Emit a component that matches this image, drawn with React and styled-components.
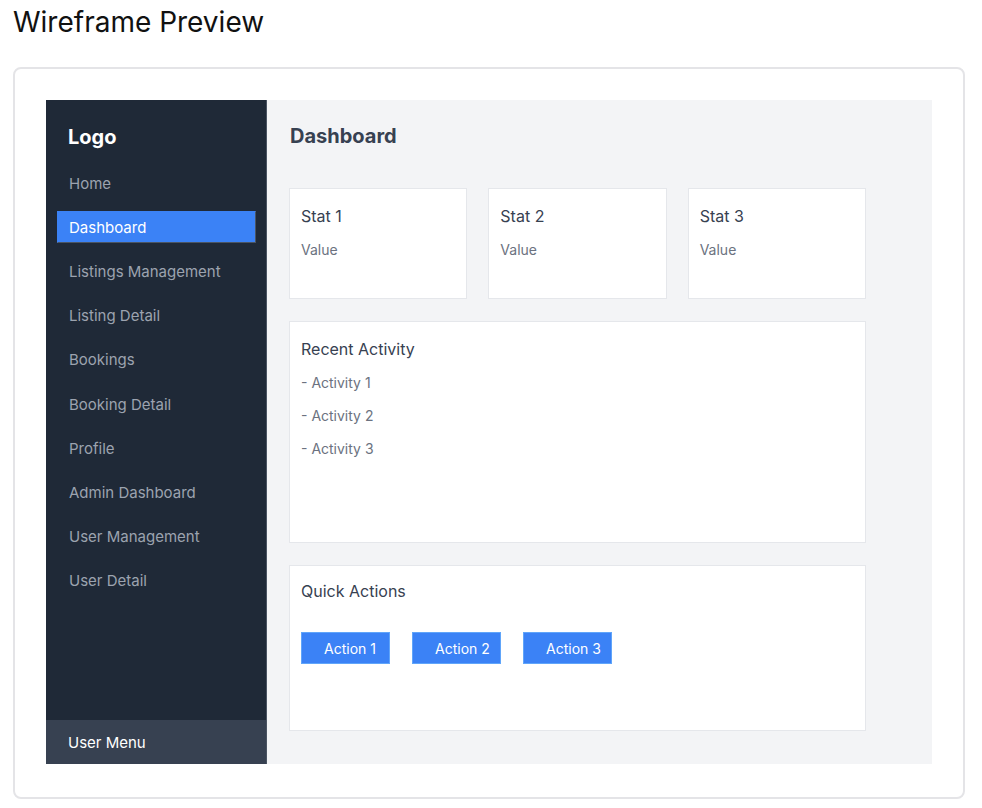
import React from "react";
import styled, { createGlobalStyle } from "styled-components";

const Global = createGlobalStyle`
  html, body { margin: 0; padding: 0; background: #ffffff; }
  body { font-family: Inter, "Noto Sans", "Liberation Sans", sans-serif; -webkit-font-smoothing: antialiased; }
  * { box-sizing: border-box; }
`;

const Page = styled.div`
  padding: 0 0 0 13px;
`;

const PageTitle = styled.h1`
  margin: 6px 0 28px;
  font-size: 28px;
  line-height: 33px;
  font-weight: 400;
  color: #111111;
`;

const PreviewCard = styled.div`
  width: 952px;
  border: 2px solid #e4e4e7;
  border-radius: 8px;
  padding: 31px 31px 33px;
  background: #ffffff;
`;

const Frame = styled.div`
  display: flex;
  height: 664px;
`;

const Sidebar = styled.aside`
  width: 221px;
  flex: none;
  background: #1f2937;
  border-right: 1px solid #4b5563;
  display: flex;
  flex-direction: column;
`;

const SideTop = styled.div`
  flex: 1;
  padding: 23px 10px 0 11px;
  display: flex;
  flex-direction: column;
  gap: 12.2px;
`;

const Logo = styled.div`
  font-size: 20px;
  line-height: 28px;
  font-weight: 700;
  color: #ffffff;
  padding-left: 11px;
  margin-bottom: 4px;
`;

const NavItem = styled.div`
  height: 32px;
  display: flex;
  align-items: center;
  padding-left: 11px;
  font-size: 15px;
  color: ${(p) => (p.$active ? "#ffffff" : "#9ca3af")};
  background: ${(p) => (p.$active ? "#3b82f6" : "transparent")};
  border: 1px solid ${(p) => (p.$active ? "#4b5563" : "transparent")};
  border-left-color: transparent;
  border-top-color: ${(p) => (p.$active ? "#3b82f6" : "transparent")};
`;

const UserMenu = styled.div`
  height: 44px;
  background: #374151;
  display: flex;
  align-items: center;
  padding-left: 22px;
  font-size: 15px;
  color: #ffffff;
`;

const Main = styled.main`
  flex: 1;
  background: #f3f4f6;
  padding: 22px 0 0 22px;
`;

const Content = styled.div`
  width: 577px;
  display: flex;
  flex-direction: column;
`;

const MainTitle = styled.h2`
  margin: 0 0 38px 1px;
  font-size: 20px;
  line-height: 28px;
  font-weight: 700;
  color: #374151;
`;

const StatGrid = styled.div`
  display: grid;
  grid-template-columns: repeat(3, 1fr);
  column-gap: 21px;
  margin-bottom: 22px;
`;

const Card = styled.div`
  background: #ffffff;
  border: 1px solid #e5e7eb;
  height: ${(p) => p.$h}px;
  padding: ${(p) => p.$pt || 15}px 11px 0;
  display: flex;
  flex-direction: column;
  margin-bottom: ${(p) => p.$mb || 0}px;
`;

const CardTitle = styled.div`
  font-size: 16px;
  line-height: 24px;
  color: #374151;
`;

const Muted = styled.div`
  font-size: 14px;
  line-height: 20px;
  color: #6b7280;
`;

const StatValue = styled(Muted)`
  margin-top: 12px;
`;

const ActivityList = styled.div`
  margin-top: 12px;
  display: flex;
  flex-direction: column;
  gap: 13px;
`;

const ButtonRow = styled.div`
  display: flex;
  gap: 22px;
  margin-top: 29px;
`;

const ActionButton = styled.button`
  height: 32px;
  width: 89px;
  padding: 0 0 0 22px;
  text-align: left;
  background: #3b82f6;
  border: 1px solid #60a5fa;
  color: #ffffff;
  font-family: inherit;
  font-size: 14px;
  cursor: pointer;
`;

const nav = [
  "Home",
  "Dashboard",
  "Listings Management",
  "Listing Detail",
  "Bookings",
  "Booking Detail",
  "Profile",
  "Admin Dashboard",
  "User Management",
  "User Detail",
];

export default function App() {
  return (
    <>
      <Global />
      <Page>
        <PageTitle>Wireframe Preview</PageTitle>
        <PreviewCard>
          <Frame>
            <Sidebar>
              <SideTop>
                <Logo>Logo</Logo>
                {nav.map((n) => (
                  <NavItem key={n} $active={n === "Dashboard"}>
                    {n}
                  </NavItem>
                ))}
              </SideTop>
              <UserMenu>User Menu</UserMenu>
            </Sidebar>
            <Main>
              <Content>
                <MainTitle>Dashboard</MainTitle>
                <StatGrid>
                  {["Stat 1", "Stat 2", "Stat 3"].map((s) => (
                    <Card key={s} $h={111}>
                      <CardTitle>{s}</CardTitle>
                      <StatValue>Value</StatValue>
                    </Card>
                  ))}
                </StatGrid>
                <Card $h={222} $mb={22}>
                  <CardTitle>Recent Activity</CardTitle>
                  <ActivityList>
                    <Muted>- Activity 1</Muted>
                    <Muted>- Activity 2</Muted>
                    <Muted>- Activity 3</Muted>
                  </ActivityList>
                </Card>
                <Card $h={166} $pt={13}>
                  <CardTitle>Quick Actions</CardTitle>
                  <ButtonRow>
                    <ActionButton>Action 1</ActionButton>
                    <ActionButton>Action 2</ActionButton>
                    <ActionButton>Action 3</ActionButton>
                  </ButtonRow>
                </Card>
              </Content>
            </Main>
          </Frame>
        </PreviewCard>
      </Page>
    </>
  );
}
